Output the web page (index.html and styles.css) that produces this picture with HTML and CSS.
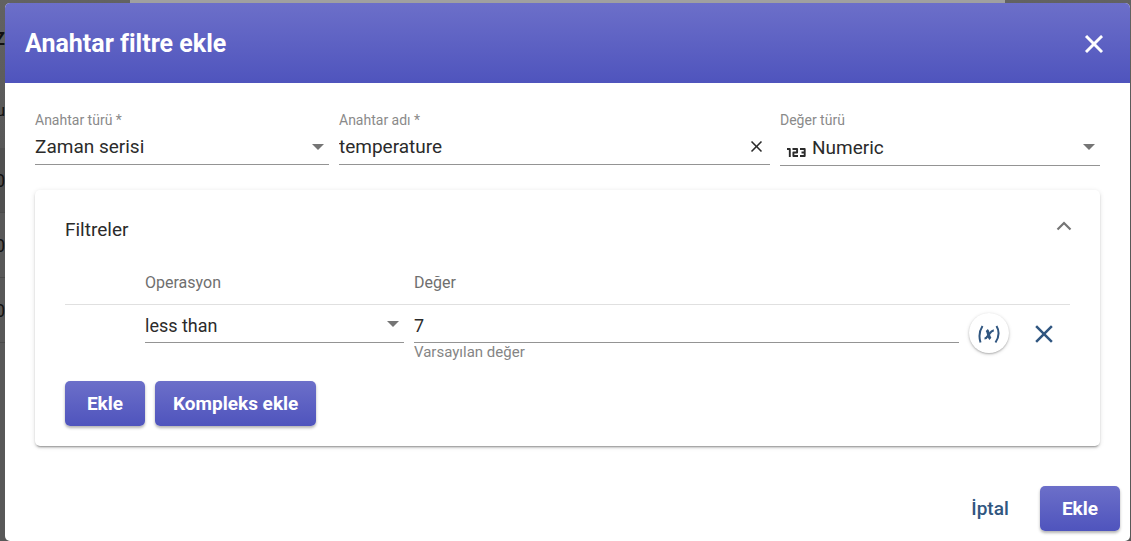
FILE: index.html
```html
<!DOCTYPE html>
<html lang="tr">
<head>
<meta charset="utf-8">
<meta name="viewport" content="width=device-width, initial-scale=1">
<title>Anahtar filtre ekle</title>
<link rel="stylesheet" href="styles.css">
</head>
<body>
<div class="backdrop" aria-hidden="true">
  <div class="backdrop-panel"></div>
  <div class="backdrop-list">
    <div class="backdrop-row backdrop-title"><b>Z</b></div>
    <div class="backdrop-row backdrop-head"><span>u</span></div>
    <div class="backdrop-row backdrop-active"><span>0</span></div>
    <div class="backdrop-row"><span>0</span></div>
    <div class="backdrop-row"><span>0</span></div>
  </div>
</div>
<form class="dialog" role="dialog" aria-labelledby="dialog-title">
  <header class="dialog-header">
    <h1 class="dialog-title" id="dialog-title">Anahtar filtre ekle</h1>
    <button class="icon-button close-button" type="button" aria-label="Kapat">
      <svg width="30" height="30" viewBox="0 0 24 24" fill="currentColor" stroke="currentColor" stroke-width=".4"><path d="M19 6.41 17.59 5 12 10.59 6.41 5 5 6.41 10.59 12 5 17.59 6.41 19 12 13.41 17.59 19 19 17.59 13.41 12z"/></svg>
    </button>
  </header>
  <main class="dialog-body">
    <div class="fields">
      <div class="field">
        <label class="field-label" for="key-type">Anahtar türü *</label>
        <div class="control">
          <select class="input" id="key-type"><option>Zaman serisi</option></select>
          <svg class="arrow" width="12" height="6" viewBox="0 0 12 6"><path d="M0 0h12L6 6z"/></svg>
        </div>
      </div>
      <div class="field">
        <label class="field-label" for="key-name">Anahtar adı *</label>
        <div class="control">
          <input class="input" id="key-name" type="text" value="temperature">
          <button class="icon-button clear-button" type="button" aria-label="Temizle">
            <svg width="19" height="19" viewBox="0 0 24 24" fill="currentColor"><path d="M19 6.41 17.59 5 12 10.59 6.41 5 5 6.41 10.59 12 5 17.59 6.41 19 12 13.41 17.59 19 19 17.59 13.41 12z"/></svg>
          </button>
        </div>
      </div>
      <div class="field">
        <label class="field-label" for="value-type">Değer türü</label>
        <div class="control control-tall">
          <svg class="numeric-icon" width="19" height="9" viewBox="0 0 19 9" fill="none" stroke="currentColor" stroke-width="1.9" stroke-linejoin="round"><path d="M0 1h2.800v8M5.500 1h4.600v3.500H6.400V8H11M13 1h4.700v7H13M14.500 4.500h3.200"/></svg>
          <select class="input" id="value-type"><option>Numeric</option></select>
          <svg class="arrow" width="12" height="6" viewBox="0 0 12 6"><path d="M0 0h12L6 6z"/></svg>
        </div>
      </div>
    </div>
    <section class="card">
      <div class="card-header">
        <h2 class="card-title">Filtreler</h2>
        <button class="icon-button collapse-button" type="button" aria-label="Daralt">
          <svg width="16" height="10" viewBox="0 0 16 10" fill="none" stroke="currentColor" stroke-width="2.2"><path d="M1.5 8.5L8 2l6.500 6.500"/></svg>
        </button>
      </div>
      <table class="filters">
        <colgroup><col class="col-index"><col class="col-operation"><col><col class="col-actions"></colgroup>
        <thead>
          <tr><th></th><th id="operation-head">Operasyon</th><th id="value-head">Değer</th><th></th></tr>
        </thead>
        <tbody>
          <tr>
            <td></td>
            <td>
              <div class="control">
                <select class="input" aria-labelledby="operation-head"><option>less than</option></select>
                <svg class="arrow" width="12" height="6" viewBox="0 0 12 6"><path d="M0 0h12L6 6z"/></svg>
              </div>
            </td>
            <td>
              <div class="control"><input class="input" type="text" value="7" aria-labelledby="value-head" aria-describedby="value-hint"></div>
              <div class="hint" id="value-hint">Varsayılan değer</div>
            </td>
            <td>
              <div class="row-actions">
                <button class="icon-button variable-button" type="button" aria-label="Dinamik değer">
                  <svg width="24" height="22" viewBox="0 0 24 22" fill="none" stroke="currentColor" stroke-width="2"><path d="M5.500 4C2 9.500 1.800 15 3.500 20.500M19.500 4c3 5 2.500 11-1 16.500"/><path stroke-width="3" d="M9.800 8c1 1 1.200 2 1.600 4s.8 3.800 2 4.800"/><path stroke-width="2.200" d="M16.800 8.300c-2.300.2-3.200 1.700-4.800 4s-2.500 4.200-4.500 4.200"/></svg>
                </button>
                <button class="icon-button remove-button" type="button" aria-label="Kaldır">
                  <svg width="30" height="30" viewBox="0 0 24 24" fill="currentColor"><path d="M19 6.41 17.59 5 12 10.59 6.41 5 5 6.41 10.59 12 5 17.59 6.41 19 12 13.41 17.59 19 19 17.59 13.41 12z"/></svg>
                </button>
              </div>
            </td>
          </tr>
        </tbody>
      </table>
      <div class="card-actions">
        <button class="button" type="button">Ekle</button>
        <button class="button" type="button">Kompleks ekle</button>
      </div>
    </section>
  </main>
  <footer class="dialog-footer">
    <button class="button button-text" type="button">İptal</button>
    <button class="button" type="submit">Ekle</button>
  </footer>
</form>
</body>
</html>
```
FILE: styles.css
```css
* {
  box-sizing: border-box;
}

body {
  margin: 0;
  padding: 3px 1px 0 5px;
  background: #5a5a5a;
  color: #2b2b2b;
  font-family: Roboto, "Liberation Sans", sans-serif;
  font-size: 19px;
}

.backdrop {
  position: fixed;
  inset: 0;
  z-index: -1;
  overflow: hidden;
  background: linear-gradient(#626262, #585858 148px);
  color: #111;
  font-size: 18px;
}

.backdrop-panel {
  height: 3px;
  margin: 0 126px 0 130px;
  background: #a0a0a0;
}

.backdrop-list {
  width: 5px;
  overflow: hidden;
}

.backdrop-row {
  display: flex;
  align-items: center;
  justify-content: flex-end;
  height: 65px;
  border-bottom: 1px solid #4a4a4a;
}

.backdrop-title {
  height: 70px;
  border: 0;
}

.backdrop-head {
  height: 75px;
  border: 0;
  font-size: 16px;
}

.backdrop-active {
  background: #505050;
}

.dialog {
  overflow: hidden;
  border-radius: 5px;
  background: #fff;
}

.dialog-header {
  display: flex;
  align-items: center;
  justify-content: space-between;
  height: 80px;
  padding: 0 20px;
  background: linear-gradient(#6c6fc9, #4f54bd);
  color: #fff;
}

.dialog-title {
  margin: 0;
  font-size: 25px;
  font-weight: 700;
}

.icon-button {
  display: flex;
  flex: none;
  align-items: center;
  justify-content: center;
  padding: 0;
  border: 0;
  background: none;
  color: inherit;
}

.close-button {
  width: 32px;
  height: 30px;
  margin-top: 2px;
}

.dialog-body {
  padding: 28px 30px 0;
}

.fields {
  display: grid;
  grid-template-columns: 294fr 431fr 320fr;
  align-items: start;
  gap: 10px;
}

.field-label {
  display: block;
  color: #8a8a8a;
  font-size: 14px;
  line-height: 18px;
}

.control {
  display: flex;
  align-items: center;
  position: relative;
  height: 36px;
  border-bottom: 1px solid #949494;
}

.control-tall {
  height: 37px;
}

.input {
  flex: 1;
  min-width: 0;
  height: 36px;
  padding: 0;
  border: 0;
  outline: 0;
  appearance: none;
  background: none;
  color: inherit;
  font: inherit;
}

.arrow {
  position: absolute;
  right: 5px;
  fill: #757575;
  pointer-events: none;
}

.clear-button {
  width: 27px;
  height: 27px;
}

.numeric-icon {
  margin: 10px 6px 0 7px;
}

.card {
  margin-top: 24px;
  padding: 24px 30px 20px;
  border-radius: 5px;
  box-shadow: 0 3px 1px -2px rgba(0, 0, 0, 0.2), 0 2px 2px rgba(0, 0, 0, 0.14), 0 1px 5px rgba(0, 0, 0, 0.12);
}

.card-header {
  display: flex;
  align-items: center;
  justify-content: space-between;
  height: 30px;
}

.card-title {
  margin: 0;
  font-size: 19px;
  font-weight: 400;
}

.collapse-button {
  width: 16px;
  height: 24px;
  margin: 0 -2px 6px 0;
  color: #757575;
}

.filters {
  width: 100%;
  margin-top: 15px;
  border-collapse: collapse;
  table-layout: fixed;
  font-size: 18px;
}

.col-index {
  width: 80px;
}

.col-operation {
  width: 269px;
}

.col-actions {
  width: 101px;
}

.filters th {
  height: 45px;
  padding: 2px 0 0;
  border-bottom: 1px solid #e0e0e0;
  color: #6f6f6f;
  font-size: 16px;
  font-weight: 400;
  text-align: left;
}

.filters td {
  height: 56px;
  padding: 2px 10px 0 0;
  vertical-align: top;
}

.filters .input {
  padding-top: 2px;
}

.filters td:last-child {
  padding: 8px 0 0;
}

.hint {
  color: #858585;
  font-size: 15px;
  line-height: 18px;
}

.row-actions {
  display: flex;
  align-items: center;
  gap: 19px;
}

.variable-button {
  width: 40px;
  height: 40px;
  border-radius: 50%;
  box-shadow: 0 1px 2px rgba(0, 0, 0, 0.25), 0 1px 4px rgba(0, 0, 0, 0.12);
  color: #305680;
}

.remove-button {
  width: 32px;
  height: 32px;
  margin-top: 2px;
  color: #305680;
}

.card-actions {
  display: flex;
  gap: 10px;
  margin-top: 20px;
}

.button {
  min-width: 80px;
  height: 45px;
  padding: 0 18px;
  border: 0;
  border-radius: 5px;
  background: linear-gradient(#6c6fc9, #4f54bd);
  box-shadow: 0 2px 3px rgba(0, 0, 0, 0.3);
  color: #fff;
  font: inherit;
  font-weight: 700;
}

.button-text {
  background: none;
  box-shadow: none;
  color: #305680;
  font-weight: 500;
}

.dialog-footer {
  display: flex;
  justify-content: flex-end;
  gap: 10px;
  padding: 40px 10px 10px;
}
```
